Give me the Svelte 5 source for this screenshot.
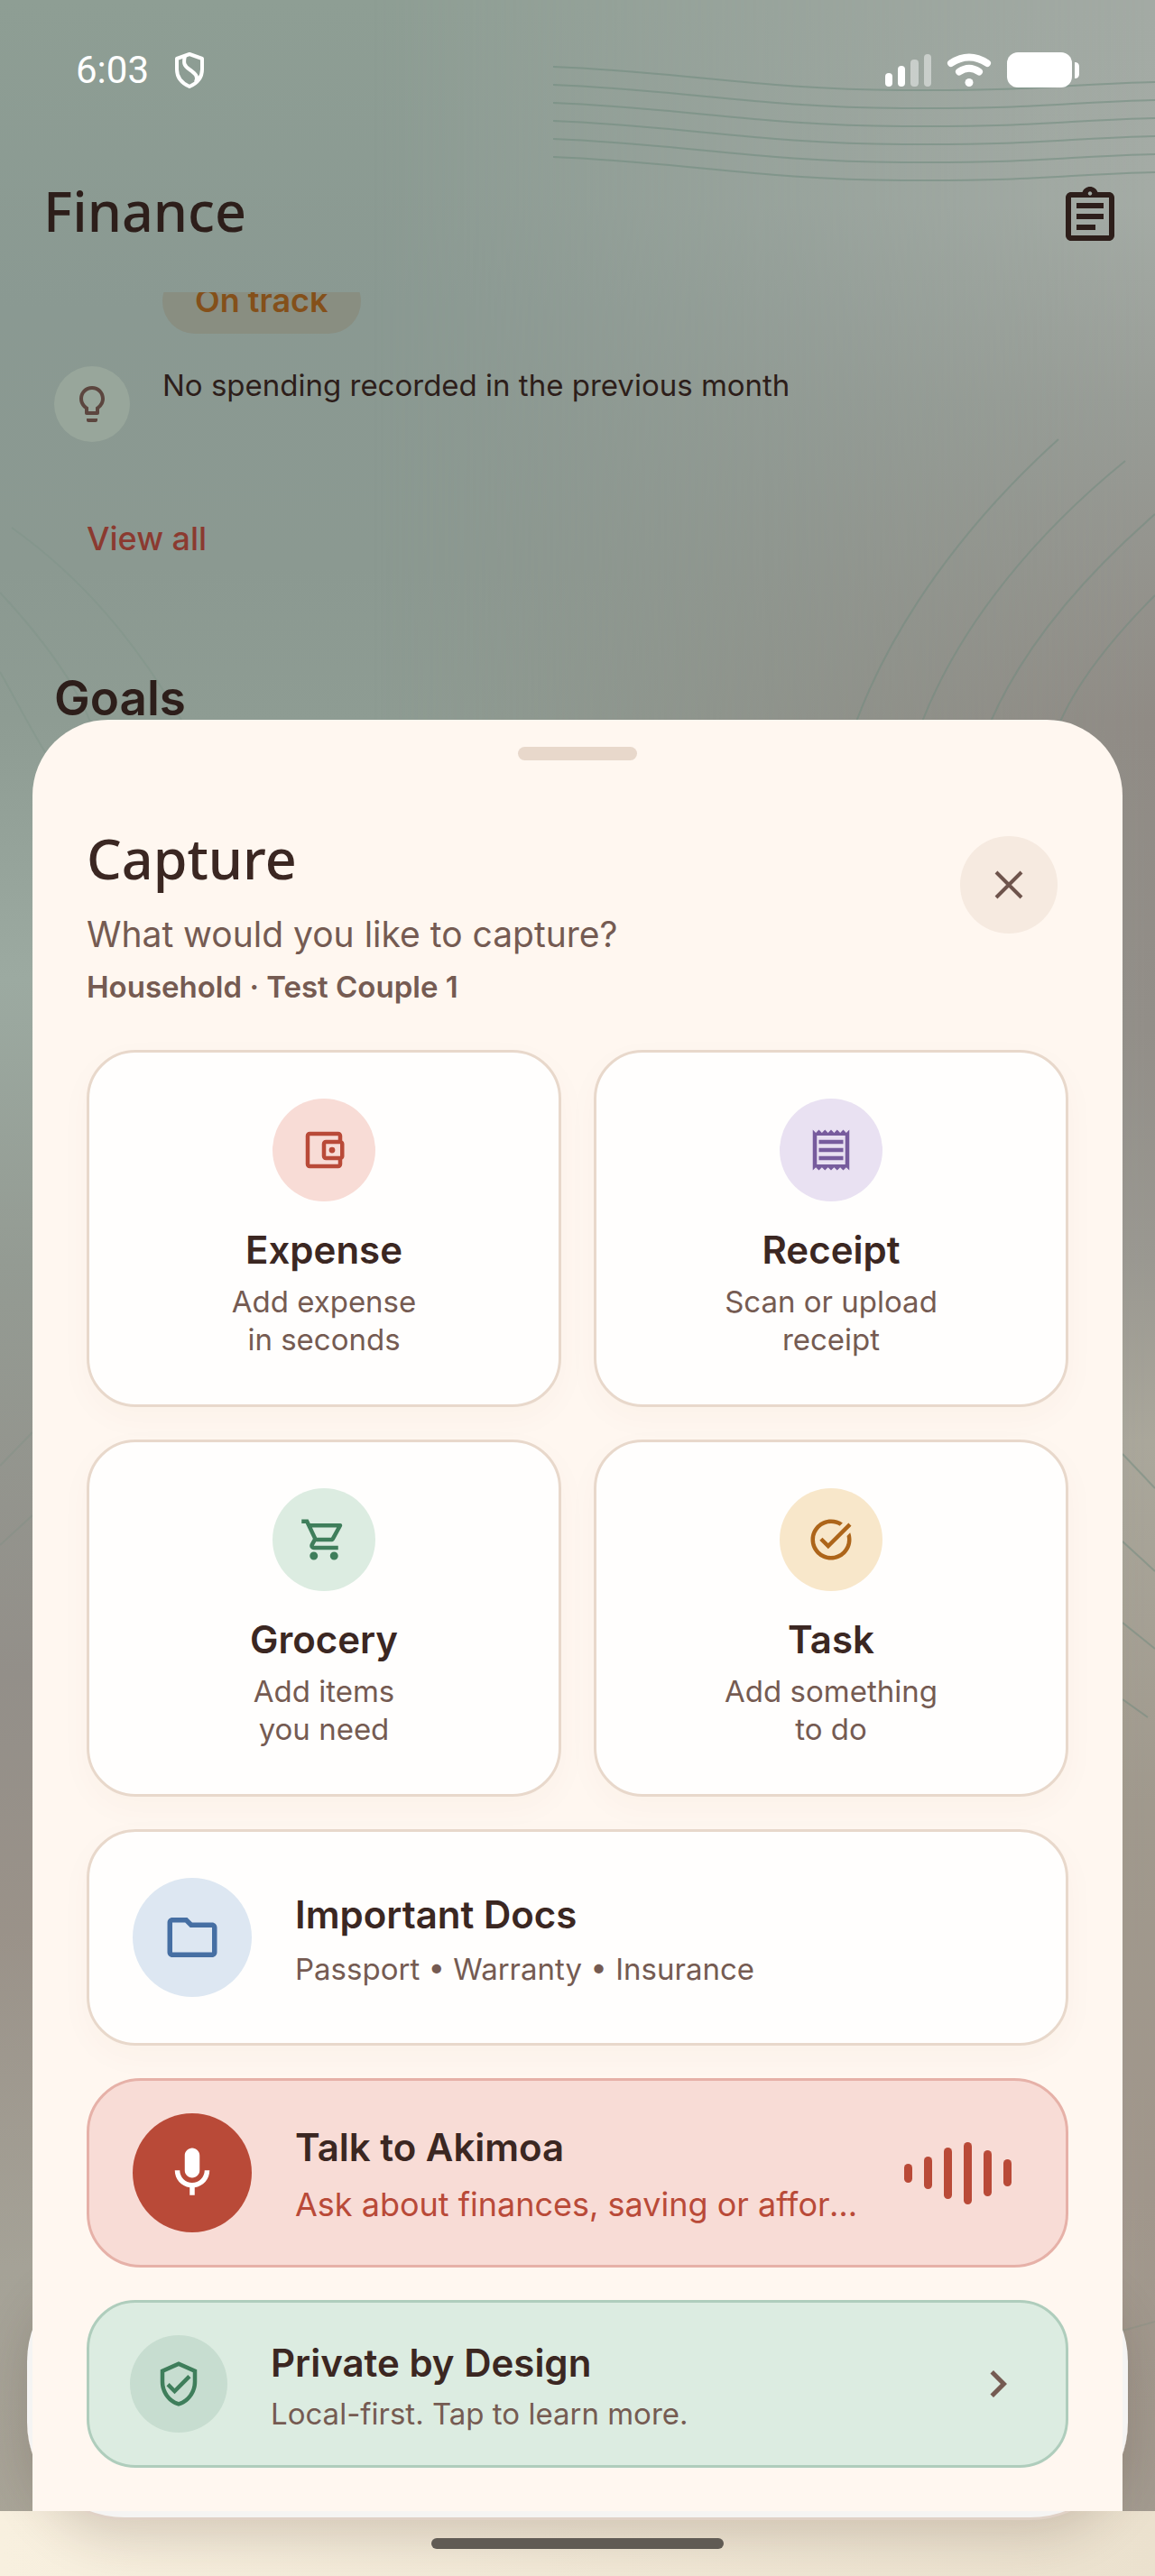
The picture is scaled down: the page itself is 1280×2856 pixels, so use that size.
<script lang="ts">
  type Action = {
    id: string;
    title: string;
    lines: [string, string];
    tint: string;
    icon: string;
  };

  const actions: Action[] = [
    {
      id: "expense",
      title: "Expense",
      lines: ["Add expense", "in seconds"],
      tint: "coral",
      icon: "M21 7.28V5c0-1.1-.9-2-2-2H5c-1.11 0-2 .9-2 2v14c0 1.1.89 2 2 2h14c1.1 0 2-.9 2-2v-2.28c.59-.35 1-.98 1-1.72V9c0-.74-.41-1.37-1-1.72zM20 9v6h-7V9h7zM5 19V5h14v2h-6c-1.1 0-2 .9-2 2v6c0 1.1.9 2 2 2h6v2H5zM16 10.5a1.5 1.5 0 1 0 0 3 1.5 1.5 0 1 0 0-3z",
    },
    {
      id: "receipt",
      title: "Receipt",
      lines: ["Scan or upload", "receipt"],
      tint: "violet",
      icon: "M19.5 3.5L18 2l-1.5 1.5L15 2l-1.5 1.5L12 2l-1.5 1.5L9 2 7.5 3.5 6 2 4.5 3.5 3 2v20l1.5-1.5L6 22l1.5-1.5L9 22l1.5-1.5L12 22l1.5-1.5L15 22l1.5-1.5L18 22l1.5-1.5L21 22V2l-1.5 1.5zM19 19.09H5V4.91h14v14.18zM6 15h12v2H6zm0-4h12v2H6zm0-4h12v2H6z",
    },
    {
      id: "grocery",
      title: "Grocery",
      lines: ["Add items", "you need"],
      tint: "green",
      icon: "M15.55 13c.75 0 1.41-.41 1.75-1.03l3.58-6.49c.37-.66-.11-1.48-.87-1.48H5.21l-.94-2H1v2h2l3.6 7.59-1.35 2.44C4.52 15.37 5.48 17 7 17h12v-2H7l1.1-2h7.45zM6.16 6h12.15l-2.76 5H8.53L6.16 6zM7 18c-1.1 0-1.99.9-1.99 2S5.9 22 7 22s2-.9 2-2-.9-2-2-2zm10 0c-1.1 0-1.99.9-1.99 2s.89 2 1.99 2 2-.9 2-2-.9-2-2-2z",
    },
    {
      id: "task",
      title: "Task",
      lines: ["Add something", "to do"],
      tint: "amber",
      icon: "M22 5.18L10.59 16.6l-4.24-4.24 1.41-1.41 2.83 2.83 10-10L22 5.18zM19.79 10.22C19.92 10.79 20 11.39 20 12c0 4.42-3.58 8-8 8s-8-3.58-8-8 3.58-8 8-8c1.58 0 3.04.46 4.28 1.25l1.44-1.44C16.1 2.67 14.13 2 12 2 6.48 2 2 6.48 2 12s4.48 10 10 10 10-4.48 10-10c0-1.19-.22-2.33-.6-3.39l-1.61 1.61z",
    },
  ];

  const wave = [21, 36, 57, 69, 51, 30];
  const ridges = [0, 20, 40, 60, 80, 100];
</script>

<div class="screen">
  <svg class="contours" viewBox="0 0 1280 2856" preserveAspectRatio="xMinYMin slice" aria-hidden="true">
    {#each ridges as dy}
      <path d="M613 {74 + dy}C760 {80 + dy} 840 {99 + dy} 1000 {100 + dy}S1180 {93 + dy} 1280 {91 + dy}" />
    {/each}
    <g class="arcs">
      <path d="M1173 487C1070 580 990 690 949 800" />
      <path d="M1247 511C1150 590 1065 690 1022 800" />
      <path d="M1280 570C1200 640 1135 715 1098 800" />
      <path d="M1280 660C1230 710 1195 755 1175 800" />
      <path d="M1244 1612L1280 1650M1244 1709L1280 1742M1244 1799L1280 1828M1244 1884L1272 1904" />
    </g>
    <g class="faint">
      <path d="M13 585C90 640 150 710 202 800" />
      <path d="M0 657C40 700 80 750 100 800M0 745C20 780 40 820 60 850" />
      <path d="M0 1625L36 1588M0 1713L36 1680M1244 2584L1280 2574" />
    </g>
  </svg>

  <header class="status">
    <span class="clock">6:03</span>
    <svg class="shield" viewBox="0 0 34 40" aria-hidden="true">
      <path d="M17 2L31 7V19C31 28 26 34 17 38C8 34 3 28 3 19V7Z" />
      <path d="M12 4C10 12 11 15 17 19C24 24 27 27 24 33" />
    </svg>
    <svg class="radio" viewBox="0 0 216 40" aria-hidden="true">
      <rect x="0" y="23" width="8" height="15" rx="4" />
      <rect x="14" y="15" width="8" height="23" rx="4" />
      <rect class="dim" x="28" y="8" width="9" height="30" rx="4" />
      <rect class="dim" x="43" y="2" width="8" height="36" rx="4" />
      <path class="arc" d="M73 12Q93 -1 113 12M82 21.500Q93 14 104 21.500" />
      <circle cx="93" cy="33.500" r="4.500" />
      <rect x="135" y="0" width="72" height="39" rx="12" />
      <path d="M210 11q5 0 5 5v8q0 5-5 5z" />
    </svg>
  </header>

  <div class="appbar">
    <h1>Finance</h1>
    <button class="plain" aria-label="Notes">
      <svg viewBox="0 0 24 24" aria-hidden="true">
        <path d="M7 15h7v2H7zm0-4h10v2H7zm0-4h10v2H7zm12-4h-4.180C14.400 1.840 13.300 1 12 1c-1.300 0-2.400.840-2.820 2H5c-1.100 0-2 .9-2 2v14c0 1.100.9 2 2 2h14c1.100 0 2-.9 2-2V5c0-1.100-.9-2-2-2zm-7-.25c.41 0 .75.34.75.75s-.34.75-.75.75-.75-.34-.75-.75.34-.75.75-.75zM19 19H5V5h14v14z" />
      </svg>
    </button>
  </div>

  <section class="feed">
    <span class="chip">On track</span>
    <div class="tip">
      <span class="bulb">
        <svg viewBox="0 0 24 24" aria-hidden="true">
          <path d="M9 21c0 .5.4 1 1 1h4c.6 0 1-.5 1-1v-1H9v1zm3-19C8.100 2 5 5.100 5 9c0 2.400 1.200 4.500 3 5.700V17c0 .5.4 1 1 1h6c.6 0 1-.5 1-1v-2.300c1.800-1.300 3-3.400 3-5.700 0-3.900-3.100-7-7-7zm2.900 11.100l-.9.600V16h-4v-2.300l-.9-.6C7.800 12.200 7 10.600 7 9c0-2.800 2.200-5 5-5s5 2.200 5 5c0 1.600-.8 3.200-2.100 4.100z" />
        </svg>
      </span>
      <p>No spending recorded in the previous month</p>
    </div>
    <a class="more" href="#all">View all</a>
    <h2>Goals</h2>
  </section>

  <div class="navbar"></div>

  <main class="sheet">
    <div class="grip"></div>
    <div class="head">
      <div>
        <h2>Capture</h2>
        <p class="ask">What would you like to capture?</p>
        <p class="scope">Household · Test Couple 1</p>
      </div>
      <button class="close" aria-label="Close">
        <svg viewBox="0 0 36 36" aria-hidden="true">
          <path d="M4 4L32 32M32 4L4 32" />
        </svg>
      </button>
    </div>

    <div class="grid">
      {#each actions as a (a.id)}
        <button class="card tile">
          <span class="disc {a.tint}">
            <svg viewBox="0 0 24 24" aria-hidden="true"><path d={a.icon} /></svg>
          </span>
          <span class="title">{a.title}</span>
          <span class="sub">{a.lines[0]}<br />{a.lines[1]}</span>
        </button>
      {/each}
    </div>

    <button class="card row docs">
      <span class="disc big blue">
        <svg viewBox="0 0 24 24" aria-hidden="true">
          <path d="M9.170 6l2 2H20v10H4V6h5.170M10 4H4c-1.100 0-1.990.9-1.990 2L2 18c0 1.100.9 2 2 2h16c1.100 0 2-.9 2-2V8c0-1.100-.9-2-2-2h-8l-2-2z" />
        </svg>
      </span>
      <span class="text">
        <span class="title">Important Docs</span>
        <span class="sub">Passport • Warranty • Insurance</span>
      </span>
    </button>

    <button class="card row talk">
      <span class="disc big red">
        <svg viewBox="0 0 24 24" aria-hidden="true">
          <path d="M12 14c1.660 0 3-1.340 3-3V5c0-1.660-1.340-3-3-3S9 3.340 9 5v6c0 1.660 1.340 3 3 3zm5-3c0 2.760-2.240 5-5 5s-5-2.240-5-5H5c0 3.530 2.610 6.430 6 6.920V21h2v-3.080c3.390-.49 6-3.390 6-6.920h-2z" />
        </svg>
      </span>
      <span class="text">
        <span class="title">Talk to Akimoa</span>
        <span class="sub">Ask about finances, saving or affordability</span>
      </span>
      <span class="wave" aria-hidden="true">
        {#each wave as h}
          <i style="height:{h}px"></i>
        {/each}
      </span>
    </button>

    <button class="card row private">
      <span class="disc mid mint">
        <svg viewBox="0 0 24 24" aria-hidden="true">
          <path d="M12 1L3 5v6c0 5.550 3.840 10.740 9 12 5.160-1.260 9-6.450 9-12V5l-9-4zm7 10c0 4.520-2.980 8.690-7 9.930-4.020-1.240-7-5.410-7-9.930V6.300l7-3.110 7 3.110V11zm-11.590.59L6 13l4 4 8-8-1.410-1.420L10 14.170z" />
        </svg>
      </span>
      <span class="text">
        <span class="title">Private by Design</span>
        <span class="sub">Local-first. Tap to learn more.</span>
      </span>
      <svg class="chevron" viewBox="0 0 24 24" aria-hidden="true">
        <path d="M10 6L8.590 7.410 13.170 12l-4.580 4.590L10 18l6-6z" />
      </svg>
    </button>
  </main>

  <footer class="gesture"><span></span></footer>
</div>

<style>
  :global(body) {
    margin: 0;
    background: #f5eddd;
  }
  .screen {
    position: relative;
    isolation: isolate;
    overflow: hidden;
    font-family: Inter, sans-serif;
    color: #2d1e1a;
    background: linear-gradient(
      #8e9e94 0%,
      #8a9992 12%,
      #8b9991 22%,
      #8e9c93 28%,
      #9caaa1 38%,
      #949b93 49%,
      #938f89 65%,
      #9a9289 75%,
      #a5a297 88%,
      #aaa598 100%
    );
  }
  /* warmer right-hand side of the wallpaper, faded in from the middle */
  .screen::before {
    content: "";
    position: absolute;
    inset: 0;
    z-index: -2;
    background: linear-gradient(
      #a3aaa4 0%,
      #a4aba5 8%,
      #989c96 16%,
      #908b85 28%,
      #928e88 40%,
      #9a9891 49%,
      #aaa79b 56%,
      #a0998d 70%,
      #a0968b 85%,
      #a39b90 100%
    );
    mask-image: linear-gradient(90deg, transparent 32%, #000 100%);
  }
  h1,
  h2,
  p {
    margin: 0;
  }
  button {
    font: inherit;
    color: inherit;
    text-align: inherit;
    border: 0;
    padding: 0;
    background: none;
    cursor: pointer;
  }
  svg {
    display: block;
    fill: currentColor;
  }
  .contours {
    position: absolute;
    inset: 0;
    z-index: -1;
    width: 100%;
    height: 100%;
    fill: none;
    stroke: #6f8a7e;
    stroke-opacity: 0.55;
    stroke-width: 2;
  }
  .contours .arcs {
    stroke-opacity: 0.5;
  }
  .contours .faint {
    stroke-opacity: 0.2;
  }

  .status {
    display: flex;
    align-items: center;
    height: 48px;
    padding: 54px 83px 0 84px;
    color: #fff;
  }
  .clock {
    font-family: Roboto, sans-serif;
    font-size: 42px;
    line-height: 48px;
  }
  .shield {
    width: 34px;
    height: 40px;
    margin-left: 28px;
    fill: none;
    stroke: currentColor;
    stroke-width: 4;
    stroke-linejoin: round;
  }
  .radio {
    width: 216px;
    height: 40px;
    margin-left: auto;
  }
  .radio .dim {
    opacity: 0.45;
  }
  .radio .arc {
    fill: none;
    stroke: currentColor;
    stroke-width: 8;
    stroke-linecap: round;
  }

  .appbar {
    display: flex;
    align-items: flex-start;
    justify-content: space-between;
    height: 132px;
    padding: 90px 36px 0 48px;
  }
  h1,
  .head h2 {
    font-family: "Noto Sans", sans-serif;
    font-weight: 500;
    font-size: 61px;
    line-height: 84px;
  }
  .plain svg {
    width: 72px;
    height: 72px;
    margin-top: 12px;
  }

  .feed {
    height: 474px;
    overflow: hidden;
    padding: 0 60px;
    box-sizing: border-box;
  }
  .chip {
    display: block;
    width: fit-content;
    margin: -26px 0 36px 120px;
    padding: 11px 36px 13px;
    border-radius: 36px;
    font-size: 36px;
    line-height: 48px;
    font-weight: 600;
    color: #84501a;
    background: #898e81;
  }
  .tip {
    display: flex;
    gap: 36px;
  }
  .bulb {
    display: grid;
    place-items: center;
    width: 84px;
    height: 84px;
    border-radius: 50%;
    color: #5c463f;
    background: #98a69b;
  }
  .bulb svg {
    width: 48px;
    height: 48px;
  }
  .tip p {
    font-size: 33px;
    line-height: 42px;
  }
  .more {
    display: block;
    width: fit-content;
    margin: 83px 0 0 36px;
    font-size: 36px;
    line-height: 48px;
    font-weight: 500;
    color: #8b3a30;
    text-decoration: none;
  }
  .feed h2 {
    margin-top: 120px;
    font-size: 53px;
    line-height: 66px;
    font-weight: 600;
  }

  /* the floating bar that the sheet covers */
  .navbar {
    position: absolute;
    left: 30px;
    right: 30px;
    bottom: 62px;
    z-index: 1;
    height: 284px;
    box-sizing: border-box;
    border-radius: 108px;
    border-bottom: 3px solid #e0d1c6;
    background: #f5f4f3;
    box-shadow: 0 18px 54px rgba(60, 40, 30, 0.18);
  }

  .sheet {
    position: relative;
    z-index: 2;
    display: flex;
    flex-direction: column;
    gap: 36px;
    margin: 0 36px;
    padding: 30px 60px 48px;
    border-radius: 84px 84px 0 0;
    background: #fff7f0;
    color: #3b2722;
  }
  .grip {
    align-self: center;
    width: 132px;
    height: 15px;
    border-radius: 8px;
    background: #e8d8cb;
  }
  .head {
    display: flex;
    justify-content: space-between;
    align-items: flex-start;
    padding: 31px 12px 13px 0;
  }
  .ask {
    font-size: 39px;
    line-height: 54px;
    margin-top: 15px;
    color: #755b52;
  }
  .scope {
    margin-top: 10px;
    font-size: 33px;
    line-height: 42px;
    font-weight: 600;
    color: #755b52;
  }
  .close {
    display: grid;
    place-items: center;
    width: 108px;
    height: 108px;
    margin-top: 17px;
    border-radius: 50%;
    color: #6e544c;
    background: #f6eae0;
  }
  .close svg {
    width: 36px;
    height: 36px;
    fill: none;
    stroke: currentColor;
    stroke-width: 4;
  }

  .grid {
    display: grid;
    grid-template-columns: 1fr 1fr;
    gap: 36px;
  }
  .card {
    border: 3px solid #e8d8cb;
    border-radius: 54px;
    background: #fffefd;
    box-shadow: 0 12px 36px rgba(120, 60, 30, 0.03);
  }
  .tile {
    display: flex;
    flex-direction: column;
    align-items: center;
    padding: 51px 24px;
    text-align: center;
  }
  .disc {
    flex: none;
    display: grid;
    place-items: center;
    width: 114px;
    height: 114px;
    border-radius: 50%;
  }
  .disc svg {
    width: 54px;
    height: 54px;
  }
  .disc.mid {
    width: 108px;
    height: 108px;
  }
  .disc.big {
    width: 132px;
    height: 132px;
  }
  .disc.big svg {
    width: 66px;
    height: 66px;
  }
  .coral {
    color: #b94a38;
    background: #f8dcd6;
  }
  .violet {
    color: #775c9d;
    background: #e9e1f2;
  }
  .green {
    color: #3f7e5b;
    background: #dcece1;
  }
  .amber {
    color: #ad651a;
    background: #f8e7ca;
  }
  .blue {
    color: #466fa3;
    background: #dde7f2;
  }
  .red {
    color: #fff;
    background: #b94a38;
  }
  .mint {
    color: #3f7e5b;
    background: #c7ddd0;
  }
  .title {
    font-size: 42px;
    line-height: 54px;
    font-weight: 600;
  }
  .sub {
    font-size: 33px;
    line-height: 42px;
    color: #755b52;
  }
  .tile .title {
    margin-top: 27px;
  }
  .tile .sub {
    margin-top: 9px;
  }

  .row {
    display: flex;
    align-items: center;
    padding: 36px 48px;
  }
  .text {
    flex: 1;
    min-width: 0;
    display: flex;
    flex-direction: column;
    gap: 12px;
    margin-left: 48px;
    padding-top: 4px;
  }
  .docs {
    padding: 51px 48px;
  }
  .talk {
    border-color: #e6b1a8;
    border-radius: 60px;
    background: #f8dcd6;
    box-shadow: none;
  }
  .talk .sub {
    overflow: hidden;
    white-space: nowrap;
    text-overflow: ellipsis;
    font-size: 36px;
    line-height: 48px;
    color: #b94a38;
  }
  .wave {
    display: flex;
    align-items: center;
    gap: 13px;
    margin: 0 12px 0 48px;
  }
  .wave i {
    width: 9px;
    border-radius: 5px;
    background: #b94a38;
  }
  .private {
    padding: 36px 45px;
    border-color: #afcdbc;
    background: #dcece1;
    box-shadow: none;
  }
  .private .text {
    gap: 8px;
  }
  .chevron {
    width: 60px;
    height: 60px;
    color: #755b52;
  }

  .gesture {
    display: flex;
    justify-content: center;
    align-items: center;
    height: 72px;
    background: linear-gradient(90deg, #f8f0df, #ebe1ce);
  }
  .gesture span {
    position: relative;
    z-index: 2;
    width: 324px;
    height: 12px;
    border-radius: 6px;
    background: #605b54;
  }
</style>
